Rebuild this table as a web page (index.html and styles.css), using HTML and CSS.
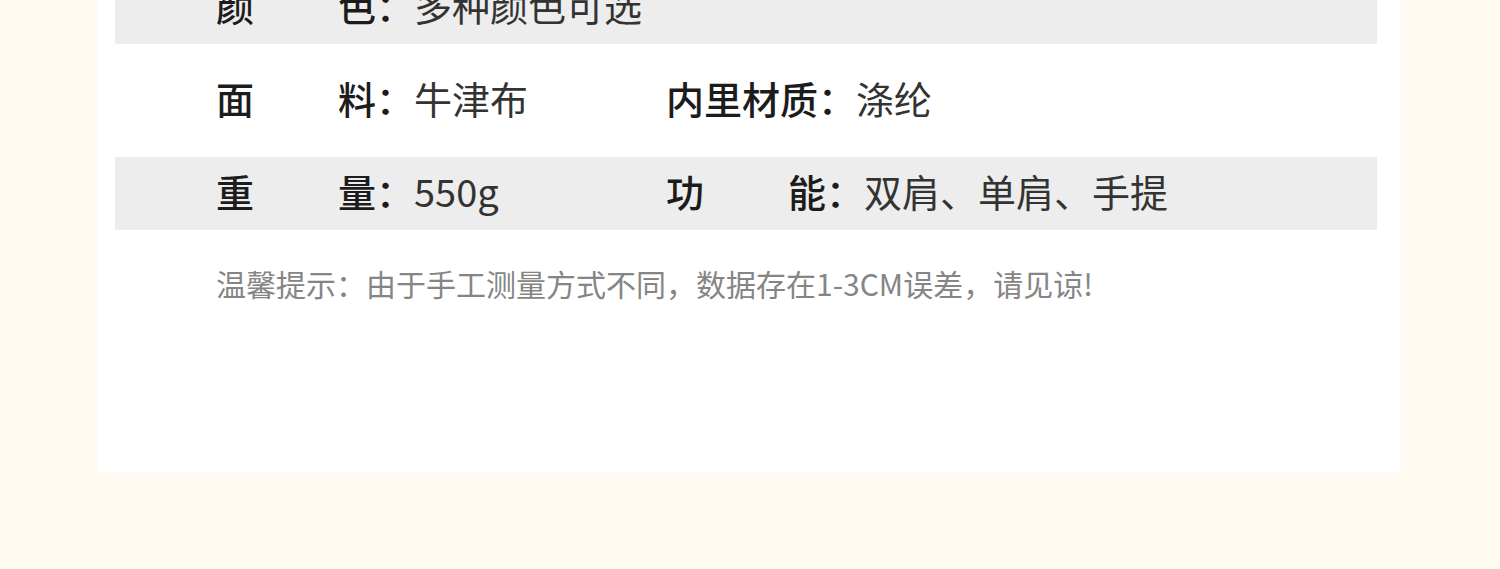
FILE: index.html
```html
<!DOCTYPE html>
<html>
  <head>
    <title>产品参数</title>
    <link rel="stylesheet" href="styles.css">
  </head>
  <body>
    <div class="card">
      <div class="params">
        <div class="row shade">
          <div class="item">
            <span class="label">颜色</span><span class="colon">：</span>
            <span class="value">多种颜色可选</span>
          </div>
        </div>
        <div class="row">
          <div class="item">
            <span class="label">面料</span><span class="colon">：</span>
            <span class="value">牛津布</span>
          </div>
          <div class="item">
            <span class="label wide">内里材质</span><span class="colon">：</span>
            <span class="value">涤纶</span>
          </div>
        </div>
        <div class="row shade">
          <div class="item">
            <span class="label">重量</span><span class="colon">：</span>
            <span class="value">550g</span>
          </div>
          <div class="item">
            <span class="label">功能</span><span class="colon">：</span>
            <span class="value">双肩、单肩、手提</span>
          </div>
        </div>
      </div>
      <p class="tip">温馨提示：由于手工测量方式不同，数据存在1-3CM误差，请见谅!</p>
    </div>
  </body>
</html>
```

FILE: styles.css
```css
body {
  margin: 0;
  background-color: #fffbf3;
  font-family: "Noto Sans CJK SC", sans-serif;
}
.card {
  width: 1285px;
  margin: -29px 0 0 98px;
  padding: 0 0 174px 17px;
  background-color: #fff;
}
.params {
  display: flex;
  flex-direction: column;
  gap: 20px;
  width: 1262px;
}
.row {
  box-sizing: border-box;
  display: flex;
  align-items: center;
  height: 73px;
  padding: 0 0 6px 101px;
  font-size: 38px;
  line-height: 1;
}
.shade {
  background-color: #ededed;
}
.item {
  display: flex;
  align-items: center;
  flex-shrink: 0;
  width: 450px;
  white-space: nowrap;
}
.label {
  display: inline-block;
  flex-shrink: 0;
  width: 160px;
  text-align: justify;
  text-align-last: justify;
  font-weight: 500;
  color: #1c1c1c;
}
.label.wide {
  width: 152px;
}
.colon {
  flex-shrink: 0;
  font-weight: 500;
  color: #1c1c1c;
}
.value {
  color: #333;
}
.tip {
  margin: 38px 0 0 101px;
  font-size: 30px;
  line-height: 30px;
  color: #858585;
}
```
